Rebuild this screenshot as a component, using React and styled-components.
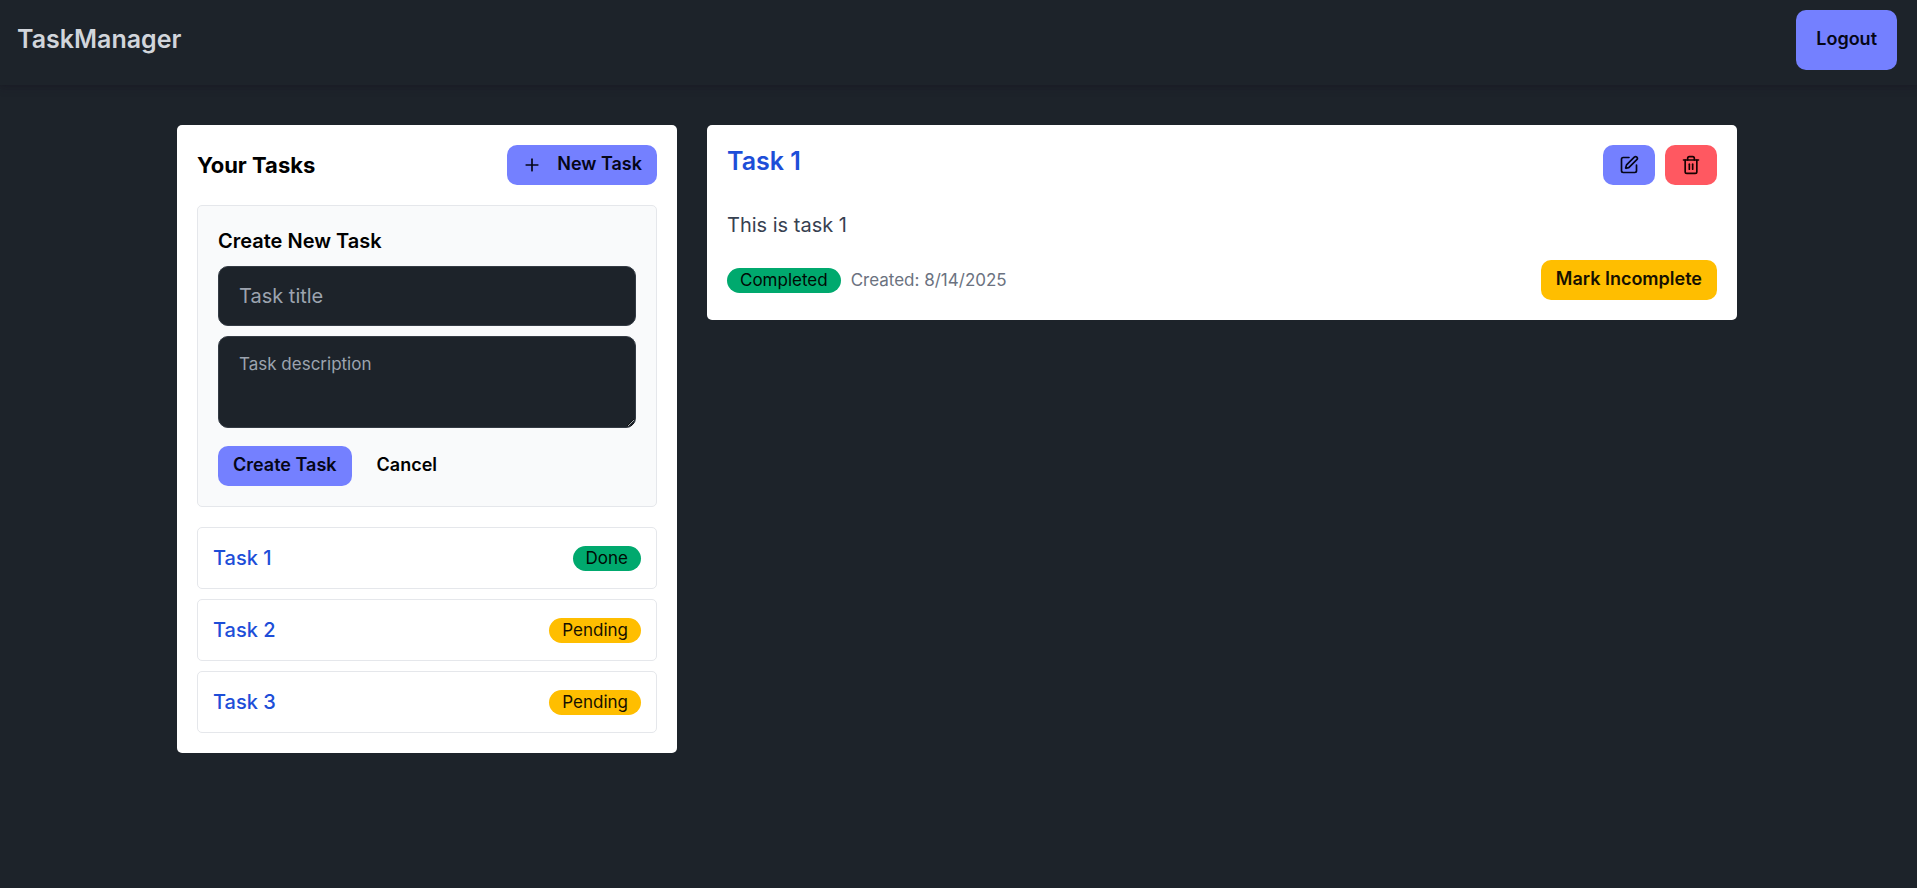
import React, { useState } from "react";
import styled, { createGlobalStyle } from "styled-components";
import { Plus, SquarePen, Trash2 } from "lucide-react";

const GlobalStyle = createGlobalStyle`
  *, *::before, *::after { box-sizing: border-box; }
  body {
    margin: 0;
    background: #1d232a;
    color: #a6adbb;
    font-family: Inter, "Liberation Sans", sans-serif;
    font-size: 20px;
    line-height: 30px;
  }
  h2, h3, p, ul { margin: 0; padding: 0; }
  button, input, textarea { font: inherit; margin: 0; }
`;

const Header = styled.header`
  display: flex;
  align-items: center;
  justify-content: space-between;
  padding: 10px 20px 15px 17px;
  box-shadow: 0 1px 4px rgba(0, 0, 0, 0.12), 0 4px 8px rgba(30, 20, 40, 0.2);
`;

const Brand = styled.a`
  color: #d1d5db;
  font-size: 25px;
  font-weight: 600;
  line-height: 35px;
  padding-bottom: 2px;
  text-decoration: none;
`;

const tones = {
  primary: { background: "#7480ff", color: "#050617" },
  error: { background: "#ff5861", color: "#160202" },
  warning: { background: "#ffbe00", color: "#161000" },
  success: { background: "#00a96e", color: "#000a04" },
  ghost: { background: "transparent", color: "#000000" },
};

const Button = styled.button`
  display: inline-flex;
  align-items: center;
  justify-content: center;
  gap: 15px;
  height: ${(p) => (p.$large ? 60 : 40)}px;
  padding: 0 ${(p) => (p.$large ? 20 : 15)}px;
  border: 0;
  border-radius: 10px;
  background: ${(p) => tones[p.$tone].background};
  color: ${(p) => tones[p.$tone].color};
  font-size: 18px;
  font-weight: 600;
  line-height: 20px;
  white-space: nowrap;
  cursor: pointer;
`;

const IconButton = styled(Button)`
  width: 52px;
  padding: 0;
`;

const ButtonLabel = styled.span`
  padding-bottom: 2px;
`;

const Main = styled.main`
  padding: 40px 3px 40px 0;
`;

const Columns = styled.div`
  display: grid;
  grid-template-columns: repeat(3, minmax(0, 1fr));
  align-items: start;
  gap: 30px;
  max-width: 1600px;
  margin: 0 auto;
  padding: 0 20px;

  @media (max-width: 1000px) {
    grid-template-columns: minmax(0, 1fr);
  }
`;

const Card = styled.section`
  padding: 20px;
  border-radius: 5px;
  background: #ffffff;
  color: #000000;
`;

const DetailCard = styled(Card)`
  grid-column: span 2;

  @media (max-width: 1000px) {
    grid-column: auto;
  }
`;

const Row = styled.div`
  display: flex;
  align-items: ${(p) => p.$align || "center"};
  justify-content: ${(p) => p.$justify || "space-between"};
  gap: 10px;
`;

const ListTitle = styled.h2`
  font-size: 22px;
  font-weight: 700;
  line-height: 35px;
`;

const TaskForm = styled.form`
  display: flex;
  flex-direction: column;
  gap: 10px;
  margin: 20px 0;
  padding: 20px;
  border: 1px solid #e5e7eb;
  border-radius: 5px;
  background: #f9fafb;
`;

const FormTitle = styled.h3`
  font-size: 20px;
  font-weight: 600;
  line-height: 30px;
`;

const TextField = styled.input`
  width: 100%;
  height: 60px;
  padding: 0 20px;
  border: 1px solid #343b44;
  border-radius: 10px;
  background: #1d232a;
  color: #a6adbb;
  &::placeholder { color: #9ca3af; opacity: 1; }
`;

const TextArea = styled.textarea`
  display: block;
  width: 100%;
  height: 92px;
  padding: 10px 20px;
  border: 1px solid #343b44;
  border-radius: 10px;
  background: #1d232a;
  color: #a6adbb;
  color-scheme: dark;
  font-size: 17px;
  line-height: 35px;
  resize: vertical;
  &::placeholder { color: #9ca3af; opacity: 1; }
`;

const FormActions = styled(Row)`
  padding-top: 8px;
`;

const TaskList = styled.ul`
  display: flex;
  flex-direction: column;
  gap: 10px;
  list-style: none;
`;

const TaskItem = styled.li`
  display: flex;
  align-items: center;
  justify-content: space-between;
  padding: 15px;
  border: 1px solid #e5e7eb;
  border-radius: 5px;
`;

const TaskLink = styled.a`
  color: #1d4ed8;
  font-weight: 500;
  text-decoration: none;
`;

const Badge = styled.span`
  display: inline-flex;
  align-items: center;
  height: 25px;
  padding: 0 13px;
  border-radius: 13px;
  background: ${(p) => tones[p.$tone].background};
  color: ${(p) => tones[p.$tone].color};
  font-size: 17px;
  line-height: 25px;
`;

const DetailTitle = styled.h2`
  color: #1d4ed8;
  font-size: 25px;
  font-weight: 600;
  line-height: 32px;
`;

const Description = styled.p`
  margin: 25px 0 20px;
  color: #374151;
`;

const Created = styled.span`
  color: #6b7280;
  font-size: 17px;
  line-height: 25px;
`;

const tasks = [
  { id: 1, title: "Task 1", done: true },
  { id: 2, title: "Task 2", done: false },
  { id: 3, title: "Task 3", done: false },
];

export default function App() {
  const [title, setTitle] = useState("");
  const [description, setDescription] = useState("");

  return (
    <>
      <GlobalStyle />
      <Header>
        <Brand href="#">TaskManager</Brand>
        <Button type="button" $tone="primary" $large>
          <ButtonLabel>Logout</ButtonLabel>
        </Button>
      </Header>
      <Main>
        <Columns>
          <Card>
            <Row>
              <ListTitle>Your Tasks</ListTitle>
              <Button type="button" $tone="primary">
                <Plus size={20} aria-hidden="true" />
                <ButtonLabel>New Task</ButtonLabel>
              </Button>
            </Row>
            <TaskForm onSubmit={(e) => e.preventDefault()}>
              <FormTitle>Create New Task</FormTitle>
              <TextField
                type="text"
                aria-label="Task title"
                placeholder="Task title"
                value={title}
                onChange={(e) => setTitle(e.target.value)}
              />
              <TextArea
                aria-label="Task description"
                placeholder="Task description"
                value={description}
                onChange={(e) => setDescription(e.target.value)}
              />
              <FormActions $justify="flex-start">
                <Button type="submit" $tone="primary">
                  <ButtonLabel>Create Task</ButtonLabel>
                </Button>
                <Button type="button" $tone="ghost">
                  <ButtonLabel>Cancel</ButtonLabel>
                </Button>
              </FormActions>
            </TaskForm>
            <TaskList>
              {tasks.map((task) => (
                <TaskItem key={task.id}>
                  <TaskLink href={`#task-${task.id}`}>{task.title}</TaskLink>
                  <Badge $tone={task.done ? "success" : "warning"}>
                    {task.done ? "Done" : "Pending"}
                  </Badge>
                </TaskItem>
              ))}
            </TaskList>
          </Card>
          <DetailCard>
            <Row $align="flex-start">
              <DetailTitle>Task 1</DetailTitle>
              <Row>
                <IconButton type="button" $tone="primary" aria-label="Edit task">
                  <SquarePen size={20} aria-hidden="true" />
                </IconButton>
                <IconButton type="button" $tone="error" aria-label="Delete task">
                  <Trash2 size={20} aria-hidden="true" />
                </IconButton>
              </Row>
            </Row>
            <Description>This is task 1</Description>
            <Row>
              <Row>
                <Badge $tone="success">Completed</Badge>
                <Created>Created: 8/14/2025</Created>
              </Row>
              <Button type="button" $tone="warning">
                <ButtonLabel>Mark Incomplete</ButtonLabel>
              </Button>
            </Row>
          </DetailCard>
        </Columns>
      </Main>
    </>
  );
}
